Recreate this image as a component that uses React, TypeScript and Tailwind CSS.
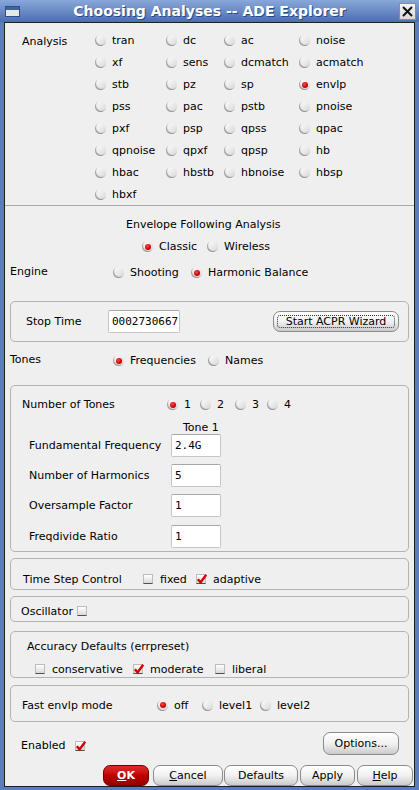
import type { ReactNode } from "react";

const Radio = ({ on = false }: { on?: boolean }) => (
  <span className="flex h-[11px] w-[11px] shrink-0 items-center justify-center rounded-full bg-linear-to-br from-white to-[#d6d6d6] shadow-[inset_1px_-1px_1px_rgba(0,0,0,0.35)]">
    {on && (
      <span className="h-[6px] w-[6px] rounded-full bg-[radial-gradient(circle_at_40%_35%,#ff4a4a,#d80000_55%,#7a0000)]" />
    )}
  </span>
);

const RadioItem = ({
  label,
  on,
  className = "",
}: {
  label: string;
  on?: boolean;
  className?: string;
}) => (
  <div className={"flex items-center gap-[6px] " + className}>
    <Radio on={on} />
    <span className="pt-[2px]">{label}</span>
  </div>
);

const Check = ({ on = false }: { on?: boolean }) => (
  <span className="relative h-[10px] w-[10px] shrink-0 border border-[#bdbdbd] border-b-[#4f4f4f] bg-linear-to-b from-white to-[#dadada]">
    {on && (
      <svg
        className="absolute -left-[1px] -top-[2px]"
        width="12"
        height="12"
        viewBox="0 0 12 12"
      >
        <path
          d="M1.8 6.2 L4.6 9.4 L10.2 1.8"
          fill="none"
          stroke="#d20000"
          strokeWidth="2.4"
        />
      </svg>
    )}
  </span>
);

const CheckItem = ({
  label,
  on,
  className = "",
}: {
  label: string;
  on?: boolean;
  className?: string;
}) => (
  <div className={"flex items-center gap-[7px] " + className}>
    <Check on={on} />
    <span className="pt-[2px]">{label}</span>
  </div>
);

const Btn = ({
  children,
  className = "",
}: {
  children: ReactNode;
  className?: string;
}) => (
  <button className={"relative flex items-center justify-center rounded-[7px] border border-[#8a8a8a] bg-linear-to-b from-white via-[#f1f1f1] to-[#cbcbcb] pt-[1px] text-[11px] text-black " + className}>
    {children}
  </button>
);

const Field = ({ value, className = "" }: { value: string; className?: string }) => (
  <div className={"flex h-[23px] items-center overflow-hidden whitespace-nowrap rounded-[2px] border border-[#c6c6c6] border-t-[#a8a8a8] bg-white pl-[3px] pt-[2px] font-['DejaVu_Sans_Mono',monospace] text-[11px] " + className}>
    {value}
  </div>
);

const Group = ({
  children,
  className = "",
}: {
  children: ReactNode;
  className?: string;
}) => (
  <div className={"mx-[5px] rounded-[5px] border border-[#b3b3b3] " + className}>
    {children}
  </div>
);

const analyses = [
  "tran", "dc", "ac", "noise",
  "xf", "sens", "dcmatch", "acmatch",
  "stb", "pz", "sp", "envlp",
  "pss", "pac", "pstb", "pnoise",
  "pxf", "psp", "qpss", "qpac",
  "qpnoise", "qpxf", "qpsp", "hb",
  "hbac", "hbstb", "hbnoise", "hbsp",
  "hbxf",
];

const fields = [
  { label: "Fundamental Frequency", value: "2.4G", mt: "" },
  { label: "Number of Harmonics", value: "5", mt: "mt-[7px]" },
  { label: "Oversample Factor", value: "1", mt: "mt-[7px]" },
  { label: "Freqdivide Ratio", value: "1", mt: "mt-[8px]" },
];

export default function App() {
  return (
    <div className="flex h-[790px] w-[419px] flex-col bg-[#5a7dbb] font-['DejaVu_Sans',sans-serif] text-[11px] text-black">
      {/* title bar */}
      <div className="flex h-[22px] items-center bg-linear-to-b from-[#88a7da] to-[#4d6fae] pl-[5px] pr-[3px]">
        <span className="flex h-[11px] w-[15px] flex-col border border-[#2f4f86] bg-[#e6e9df]">
          <span className="h-[3px] bg-[#3f63a3]" />
        </span>
        <span className="flex-1 text-center text-[14px] font-bold text-white [text-shadow:1px_1px_0_#2c4a82]">
          Choosing Analyses -- ADE Explorer
        </span>
        <span className="flex h-[17px] w-[17px] items-center justify-center border border-[#8d8d8d] bg-linear-to-b from-[#f4f4f4] to-[#d8d8d8]">
          <svg width="11" height="11" viewBox="0 0 11 11">
            <path d="M1 1 L10 10 M10 1 L1 10" stroke="#111" strokeWidth="2" />
          </svg>
        </span>
      </div>

      <div className="mx-[4px] mb-[3px] flex flex-1 flex-col border border-[#1f1f1f] bg-[#efefef]">
        {/* analysis list */}
        <div className="flex pl-[17px] pt-[6px]">
          <div className="flex h-[22px] w-[73px] items-center pt-[5px]">Analysis</div>
          <div className="grid grid-cols-[71px_58px_75px_1fr]">
            {analyses.map((a) => (
              <RadioItem key={a} label={a} on={a === "envlp"} className="h-[22px] pt-[1px]" />
            ))}
          </div>
        </div>
        <div className="border-t border-[#a8a8a8]" />

        <div className="mt-[7px] flex h-[22px] items-center pl-[121px] pt-[2px]">
          Envelope Following Analysis
        </div>
        <div className="flex h-[22px] items-center pl-[137px] pt-[1px]">
          <RadioItem label="Classic" on className="w-[65px]" />
          <RadioItem label="Wireless" />
        </div>
        <div className="mt-[4px] flex h-[22px] items-center pl-[5px] pt-[1px]">
          <div className="w-[103px] pb-[1px]">Engine</div>
          <RadioItem label="Shooting" className="w-[78px]" />
          <RadioItem label="Harmonic Balance" on />
        </div>

        <Group className="mt-[18px] flex h-[41px] items-center pl-[15px] pr-[9px]">
          <div className="w-[82px] pt-[2px]">Stop Time</div>
          <Field value="0002730667" className="w-[72px]" />
          <Btn className="ml-auto h-[21px] w-[126px]">
            <span className="absolute inset-[3px] rounded-[3px] border border-dotted border-[#333]" />
            Start ACPR Wizard
          </Btn>
        </Group>

        <div className="mt-[7px] flex h-[22px] items-center pl-[5px] pt-[1px]">
          <div className="w-[103px]">Tones</div>
          <RadioItem label="Frequencies" on className="w-[95px]" />
          <RadioItem label="Names" />
        </div>

        <Group className="mt-[14px] h-[167px] pt-[7px]">
          <div className="flex h-[22px] items-center pl-[11px] pt-[1px]">
            <div className="w-[145px] pt-[1px]">Number of Tones</div>
            <RadioItem label="1" on className="w-[33px]" />
            <RadioItem label="2" className="w-[35px]" />
            <RadioItem label="3" className="w-[32px]" />
            <RadioItem label="4" />
          </div>
          <div className="mt-[7px] h-[12px] pl-[172px] leading-[12px]">Tone 1</div>
          {fields.map((f) => (
            <div key={f.label} className={"flex items-center pl-[18px] " + f.mt}>
              <div className="w-[142px] pt-[2px]">{f.label}</div>
              <Field value={f.value} className="w-[50px]" />
            </div>
          ))}
        </Group>

        <Group className="mt-[6px] h-[32px] pt-[10px]">
          <div className="flex h-[20px] items-center pl-[12px]">
            <div className="w-[120px] pt-[2px]">Time Step Control</div>
            <CheckItem label="fixed" className="w-[53px]" />
            <CheckItem label="adaptive" on />
          </div>
        </Group>

        <Group className="mt-[6px] h-[26px] pt-[4px]">
          <div className="flex h-[20px] items-center gap-[4px] pl-[10px]">
            <span className="pt-[2px]">Oscillator</span>
            <Check />
          </div>
        </Group>

        <Group className="mt-[9px] h-[47px] pt-[6px]">
          <div className="flex h-[16px] items-center pl-[16px] pt-[2px]">
            Accuracy Defaults (errpreset)
          </div>
          <div className="mt-[7px] flex h-[16px] items-center pl-[24px]">
            <CheckItem label="conservative" className="w-[98px]" />
            <CheckItem label="moderate" on className="w-[82px]" />
            <CheckItem label="liberal" />
          </div>
        </Group>

        <Group className="mt-[7px] h-[37px] pt-[8px]">
          <div className="flex h-[22px] items-center pl-[11px]">
            <div className="w-[135px] pt-[2px]">Fast envlp mode</div>
            <RadioItem label="off" on className="w-[45px]" />
            <RadioItem label="level1" className="w-[58px]" />
            <RadioItem label="level2" />
          </div>
        </Group>

        <div className="mt-[10px] flex h-[23px] items-center pl-[16px] pr-[15px]">
          <div className="flex items-center pt-[5px]">
            <div className="w-[54px]">Enabled</div>
            <Check on />
          </div>
          <Btn className="ml-auto h-[23px] w-[76px]">Options...</Btn>
        </div>

        <div className="mt-[10px] flex h-[21px] justify-end pr-[1px]">
          <button className="mr-[4px] flex h-[21px] w-[46px] items-center justify-center rounded-[7px] border border-[#6e0000] bg-linear-to-b from-[#de2a2a] via-[#c00000] to-[#940000] pt-[1px] text-[11px] font-bold text-white">
            <span>
              <span className="underline">O</span>K
            </span>
          </button>
          <Btn className="mr-[1px] h-[21px] w-[70px]">
            <span>
              <span className="underline">C</span>ancel
            </span>
          </Btn>
          <Btn className="mr-[2px] h-[21px] w-[74px]">Defaults</Btn>
          <Btn className="mr-[2px] h-[21px] w-[55px]">Apply</Btn>
          <Btn className="h-[21px] w-[56px]">
            <span>
              <span className="underline">H</span>elp
            </span>
          </Btn>
        </div>
      </div>
    </div>
  );
}
